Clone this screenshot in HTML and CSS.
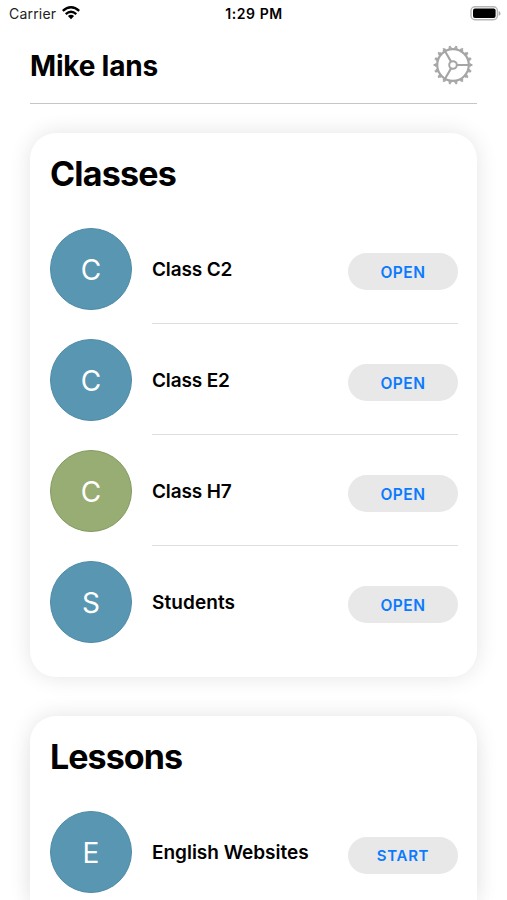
FILE: index.html
```html
<!DOCTYPE html>
<html lang="en">
<head>
<meta charset="utf-8">
<title>Mike Ians</title>
<link rel="stylesheet" href="styles.css">
</head>
<body>
<div class="status">
  <div class="carrier"><span>Carrier</span>
    <svg class="wifi" width="18" height="14" viewBox="0 0 18 14"><g fill="none" stroke="#000" stroke-width="2.3"><path d="M.8 4.9Q9-2.5 17.2 4.9"/><path d="M3.7 8.1Q9 3.4 14.3 8.1"/></g><path d="M5.9 10.1Q9 7.6 12.1 10.1L9 13.3Z"/></svg>
  </div>
  <div class="time">1:29 PM</div>
  <svg class="battery" width="31" height="15" viewBox="0 0 31 15"><rect x="1" y=".8" width="26.4" height="13" rx="4" fill="#fff" stroke="#b5b5b5" stroke-width="1.4"/><rect x="3" y="2.5" width="22.6" height="9.6" rx="2"/><path d="M28.7 5v4.8q1.8-.8 1.8-2.4t-1.8-2.4" fill="#aaa"/></svg>
</div>
<header class="header">
  <h1>Mike Ians</h1>
  <svg class="gear" width="40" height="40" viewBox="-20 -20 40 40" fill="none" stroke="#a5a5a5"><circle r="17.3" stroke-width="1.6" pathLength="180" stroke-dasharray="5.4 4.6" stroke-dashoffset="2.7"/><circle r="18.6" stroke-width="1.6" pathLength="180" stroke-dasharray="3 7" stroke-dashoffset="1.5"/><circle r="15.8" stroke-width="2.2"/><circle r="3.8" stroke-width="2"/><path d="M3.9 0H15.6M-1.95-3.4-7.8-13.5M-1.95 3.4-7.8 13.5" stroke-width="2.1"/></svg>
</header>
<main>
  <section class="card">
    <h2>Classes</h2>
    <div class="row"><div class="avatar">C</div><div class="detail"><span class="name">Class C2</span><button>OPEN</button></div></div>
    <div class="row"><div class="avatar">C</div><div class="detail"><span class="name">Class E2</span><button>OPEN</button></div></div>
    <div class="row"><div class="avatar green">C</div><div class="detail"><span class="name">Class H7</span><button>OPEN</button></div></div>
    <div class="row"><div class="avatar">S</div><div class="detail"><span class="name students">Students</span><button>OPEN</button></div></div>
  </section>
  <section class="card">
    <h2 class="lessons">Lessons</h2>
    <div class="row"><div class="avatar">E</div><div class="detail"><span class="name websites">English Websites</span><button class="start">START</button></div></div>
  </section>
</main>
</body>
</html>
```
FILE: styles.css
```css
* { box-sizing: border-box; }
body { margin: 0; height: 900px; overflow: hidden; background: #fff; color: #000; font-family: Inter, "Liberation Sans", sans-serif; }
.status { display: grid; grid-template-columns: 1fr auto 1fr; height: 28px; padding: 0 6px 0 9px; align-items: center; }
.carrier { display: flex; align-items: center; gap: 6px; margin-top: -2px; font-size: 14px; letter-spacing: .2px; color: #222; }
.wifi { margin-top: -1px; }
.time { margin: -2px 2px 0 0; font-size: 14px; font-weight: 600; letter-spacing: .6px; }
.battery { justify-self: end; margin-top: -1px; }
.header { display: flex; justify-content: space-between; align-items: center; height: 76px; margin: 0 30px; padding: 0 4px 2px 0; border-bottom: 1px solid #c6c6c6; }
h1, h2 { margin: 0; font-weight: 700; }
h1 { padding-top: 2px; font-size: 28px; letter-spacing: -.2px; }
main { display: flex; flex-direction: column; gap: 39px; padding: 29px 30px 0; }
.card { height: 544px; flex: none; padding: 0 19px 20px 20px; border-radius: 26px; background: #fff; box-shadow: 0 0 22px rgba(0,0,0,.11); }
.card:last-child { height: 184px; padding-bottom: 0; border-radius: 26px 26px 0 0; box-shadow: 0 0 22px rgba(0,0,0,.11), 0 20px 22px rgba(0,0,0,.03); }
h2 { height: 80px; padding-top: 20px; font-size: 34px; line-height: 41px; letter-spacing: -.8px; }
.lessons { letter-spacing: -.95px; }
.row { display: flex; height: 111px; gap: 20px; }
.card:last-child .row { height: 104px; }
.card:last-child .detail { height: 111px; }
.avatar { flex: none; width: 82px; height: 82px; margin-top: 15px; border: 1px solid #4d8ba7; border-radius: 50%; background: #5896b2; color: #fff; font-size: 28px; font-weight: 400; line-height: 82px; text-align: center; }
.green { background: #98ad73; border-color: #849a60; }
.detail { flex: 1; display: flex; justify-content: space-between; align-items: center; border-bottom: 1px solid #dedede; }
.row:last-child .detail { border-color: transparent; }
.name { padding-top: 2px; font-size: 19px; font-weight: 600; letter-spacing: -.15px; white-space: nowrap; }
.students { letter-spacing: .08px; }
.websites { letter-spacing: -.02px; }
button { width: 110px; height: 37px; margin-top: 7px; padding: 1px 0 0; border: 0; border-radius: 19px; background: #e8e8e8; color: #0a7aff; font: 600 15.5px Inter, sans-serif; letter-spacing: .5px; }
.start { margin-top: 8px; padding: 0; font-size: 15px; letter-spacing: .7px; }
```
